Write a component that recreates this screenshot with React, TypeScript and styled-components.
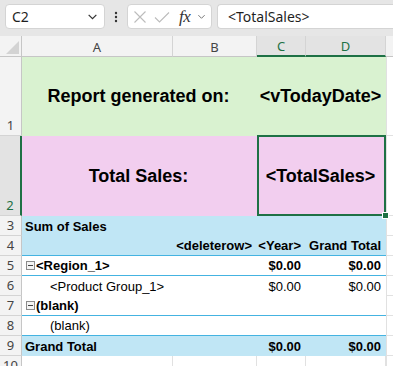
import React from "react";
import styled, { createGlobalStyle, css } from "styled-components";

const GlobalStyle = createGlobalStyle`
    html, body {
        margin: 0;
        padding: 0;
        background: #fff;
        overflow: hidden;
    }
`

const CELL_FONT = `"Liberation Sans", Arial, sans-serif`;
const UI_FONT = `"Noto Sans", "Open Sans", Arial, sans-serif`;

const GREEN = '#d9f2d0';
const PINK = '#f2ceef';
const BLUE = '#c0e6f5';
const BLUE_LINE = '#44b3e1';
const GRID = '#e1e1e1';
const SELECT = '#1e7145';

const Page = styled.div`
    width: 393px;
    height: 366px;
    overflow: hidden;
    display: flex;
    flex-direction: column;
    background: #fff;
`

/** Formula bar */
const Toolbar = styled.div`
    height: 36px;
    flex: 0 0 36px;
    box-sizing: border-box;
    background: #e6e6e6;
    display: flex;
    align-items: flex-start;
    padding: 4px 0 0 5px;
    font-family: ${UI_FONT};
`

const NameBox = styled.div`
    width: 100px;
    height: 25px;
    box-sizing: border-box;
    background: #fff;
    border: 1px solid #d4d4d4;
    border-radius: 4px;
    display: flex;
    align-items: center;
    justify-content: space-between;
    padding: 0 6px 0 6px;
    font-size: 14px;
    color: #1f1f1f;
`

const Dots = styled.div`
    width: 22px;
    height: 25px;
    display: flex;
    align-items: center;
    justify-content: center;
`

const ActionBox = styled.div`
    width: 85px;
    height: 25px;
    box-sizing: border-box;
    background: #fff;
    border: 1px solid #d4d4d4;
    border-radius: 4px;
    display: flex;
    align-items: center;
    padding: 0 4px 0 5px;
    gap: 7px;
`

const Fx = styled.span`
    font-family: "Liberation Serif", "DejaVu Serif", serif;
    font-style: italic;
    font-size: 17px;
    color: #333;
    margin-left: 2px;
    letter-spacing: -0.5px;
`

const FormulaBox = styled.div`
    flex: 1;
    height: 25px;
    margin-left: 5px;
    box-sizing: border-box;
    background: #fff;
    border: 1px solid #d4d4d4;
    border-right: none;
    border-radius: 4px 0 0 4px;
    display: flex;
    align-items: center;
    padding-left: 10px;
    font-size: 14px;
    color: #1f1f1f;
`

/** Sheet */
const Sheet = styled.div`
    flex: 1;
    display: grid;
    grid-template-columns: 22px 151px 84px 49px 80px 1fr;
    grid-template-rows: 21px 79px 80px repeat(8, 20px);
`

const Corner = styled.div`
    background: #f3f3f3;
    border-right: 1px solid #c6c6c6;
    border-bottom: 1px solid #c6c6c6;
    box-sizing: border-box;
    position: relative;
    &::after {
        content: "";
        position: absolute;
        right: 2px;
        bottom: 2px;
        width: 0;
        height: 0;
        border-left: 13px solid transparent;
        border-bottom: 13px solid #d3d3d3;
    }
`

const ColHead = styled.div<{ $selected?: boolean }>`
    background: ${p => p.$selected ? '#e3e3e3' : '#f3f3f3'};
    border-right: 1px solid #d4d4d4;
    border-bottom: ${p => p.$selected ? `2px solid ${SELECT}` : '1px solid #c6c6c6'};
    box-sizing: border-box;
    display: flex;
    align-items: center;
    justify-content: center;
    font-family: ${UI_FONT};
    font-size: 13px;
    color: ${p => p.$selected ? SELECT : '#444'};
    padding-top: 1px;
`

const RowHead = styled.div<{ $selected?: boolean }>`
    background: ${p => p.$selected ? '#e3e3e3' : '#f3f3f3'};
    border-right: ${p => p.$selected ? `2px solid ${SELECT}` : '1px solid #c6c6c6'};
    border-bottom: 1px solid #d4d4d4;
    box-sizing: border-box;
    display: flex;
    align-items: flex-end;
    justify-content: center;
    padding-bottom: 1px;
    font-family: ${UI_FONT};
    font-size: 13px;
    line-height: 18px;
    color: ${p => p.$selected ? SELECT : '#444'};
`

type CellProps = {
    $fill?: string;
    $bold?: boolean;
    $align?: 'left' | 'right' | 'center';
    $span?: number;
    $grid?: boolean;
    $line?: boolean;
    $indent?: number;
    $big?: boolean;
    $edge?: boolean;
}

const Cell = styled.div<CellProps>`
    grid-column: span ${p => p.$span || 1};
    background: ${p => p.$fill || '#fff'};
    box-sizing: border-box;
    display: flex;
    align-items: center;
    justify-content: ${p => p.$align === 'right' ? 'flex-end' : p.$align === 'center' ? 'center' : 'flex-start'};
    padding: 0 5px 0 ${p => p.$indent ?? 3}px;
    font-family: ${CELL_FONT};
    font-size: ${p => p.$big ? '18px' : '13px'};
    font-weight: ${p => p.$bold ? 700 : 400};
    color: #000;
    white-space: nowrap;
    overflow: visible;
    position: relative;
    ${p => p.$grid && css`
        border-right: 1px solid ${GRID};
        border-bottom: 1px solid ${GRID};
    `}
    ${p => p.$edge && css`
        border-left: 1px solid ${GRID};
    `}
    ${p => p.$line && css`
        border-bottom: 1px solid ${BLUE_LINE};
    `}
`

const Selection = styled.div`
    position: absolute;
    left: 0;
    top: -1px;
    right: 0;
    bottom: 0;
    border: 2px solid ${SELECT};
    pointer-events: none;
`

const FillHandle = styled.div`
    position: absolute;
    right: -3px;
    bottom: -3px;
    width: 5px;
    height: 5px;
    background: ${SELECT};
    border: 1px solid #fff;
    z-index: 2;
`

const Collapse = styled.span`
    display: inline-flex;
    align-items: center;
    justify-content: center;
    width: 9px;
    height: 9px;
    box-sizing: border-box;
    border: 1px solid #8c8c8c;
    background: #f4f4f4;
    margin-right: 1px;
    &::before {
        content: "";
        width: 5px;
        height: 1px;
        background: #444;
    }
`

const Chevron: React.FC<{ size?: number; color?: string }> = ({ size = 10, color = '#555' }) => (
    <svg width={size} height={size} viewBox="0 0 10 10">
        <path d="M1.5 3.5 L5 7 L8.5 3.5" fill="none" stroke={color} strokeWidth="1.1" />
    </svg>
)

const Spare = () => <Cell $grid $edge />

const App: React.FC = () => {
    return (
        <Page>
            <GlobalStyle />
            <Toolbar>
                <NameBox>
                    <span>C2</span>
                    <Chevron size={11} color="#333" />
                </NameBox>
                <Dots>
                    <svg width="4" height="12" viewBox="0 0 4 12">
                        <circle cx="2" cy="2" r="1.2" fill="#333" />
                        <circle cx="2" cy="6" r="1.2" fill="#333" />
                        <circle cx="2" cy="10" r="1.2" fill="#333" />
                    </svg>
                </Dots>
                <ActionBox>
                    <svg width="14" height="14" viewBox="0 0 14 14">
                        <path d="M1.5 1.5 L12.5 12.5 M12.5 1.5 L1.5 12.5" stroke="#bcbcbc" strokeWidth="1.1" fill="none" />
                    </svg>
                    <svg width="16" height="14" viewBox="0 0 16 14">
                        <path d="M1 7.5 L5.5 12 L15 2.5" stroke="#bcbcbc" strokeWidth="1.1" fill="none" />
                    </svg>
                    <Fx>fx</Fx>
                    <Chevron size={9} color="#777" />
                </ActionBox>
                <FormulaBox>&lt;TotalSales&gt;</FormulaBox>
            </Toolbar>

            <Sheet>
                <Corner />
                <ColHead>A</ColHead>
                <ColHead>B</ColHead>
                <ColHead $selected>C</ColHead>
                <ColHead $selected>D</ColHead>
                <ColHead />

                <RowHead>1</RowHead>
                <Cell $span={2} $fill={GREEN} $big $bold $align="center">Report generated on:</Cell>
                <Cell $span={2} $fill={GREEN} $big $bold $align="center">&lt;vTodayDate&gt;</Cell>
                <Spare />

                <RowHead $selected>2</RowHead>
                <Cell $span={2} $fill={PINK} $big $bold $align="center">Total Sales:</Cell>
                <Cell $span={2} $fill={PINK} $big $bold $align="center">
                    &lt;TotalSales&gt;
                    <Selection />
                    <FillHandle />
                </Cell>
                <Spare />

                <RowHead>3</RowHead>
                <Cell $fill={BLUE} $bold>Sum of Sales</Cell>
                <Cell $fill={BLUE} />
                <Cell $fill={BLUE} />
                <Cell $fill={BLUE} />
                <Spare />

                <RowHead>4</RowHead>
                <Cell $fill={BLUE} $line />
                <Cell $fill={BLUE} $line $bold $align="right">&lt;deleterow&gt;</Cell>
                <Cell $fill={BLUE} $line $bold $align="right">&lt;Year&gt;</Cell>
                <Cell $fill={BLUE} $line $bold $align="right">Grand Total</Cell>
                <Spare />

                <RowHead>5</RowHead>
                <Cell $line $bold $indent={4}><Collapse />&lt;Region_1&gt;</Cell>
                <Cell $line />
                <Cell $line $bold $align="right">$0.00</Cell>
                <Cell $line $bold $align="right">$0.00</Cell>
                <Spare />

                <RowHead>6</RowHead>
                <Cell $indent={28}>&lt;Product Group_1&gt;</Cell>
                <Cell />
                <Cell $align="right">$0.00</Cell>
                <Cell $align="right">$0.00</Cell>
                <Spare />

                <RowHead>7</RowHead>
                <Cell $line $bold $indent={4}><Collapse />(blank)</Cell>
                <Cell $line />
                <Cell $line />
                <Cell $line />
                <Spare />

                <RowHead>8</RowHead>
                <Cell $line $indent={28}>(blank)</Cell>
                <Cell $line />
                <Cell $line />
                <Cell $line />
                <Spare />

                <RowHead>9</RowHead>
                <Cell $fill={BLUE} $bold>Grand Total</Cell>
                <Cell $fill={BLUE} />
                <Cell $fill={BLUE} $bold $align="right">$0.00</Cell>
                <Cell $fill={BLUE} $bold $align="right">$0.00</Cell>
                <Spare />

                <RowHead>10</RowHead>
                <Cell $grid />
                <Cell $grid />
                <Cell $grid />
                <Cell $grid />
                <Spare />
            </Sheet>
        </Page>
    )
}

export default App;
